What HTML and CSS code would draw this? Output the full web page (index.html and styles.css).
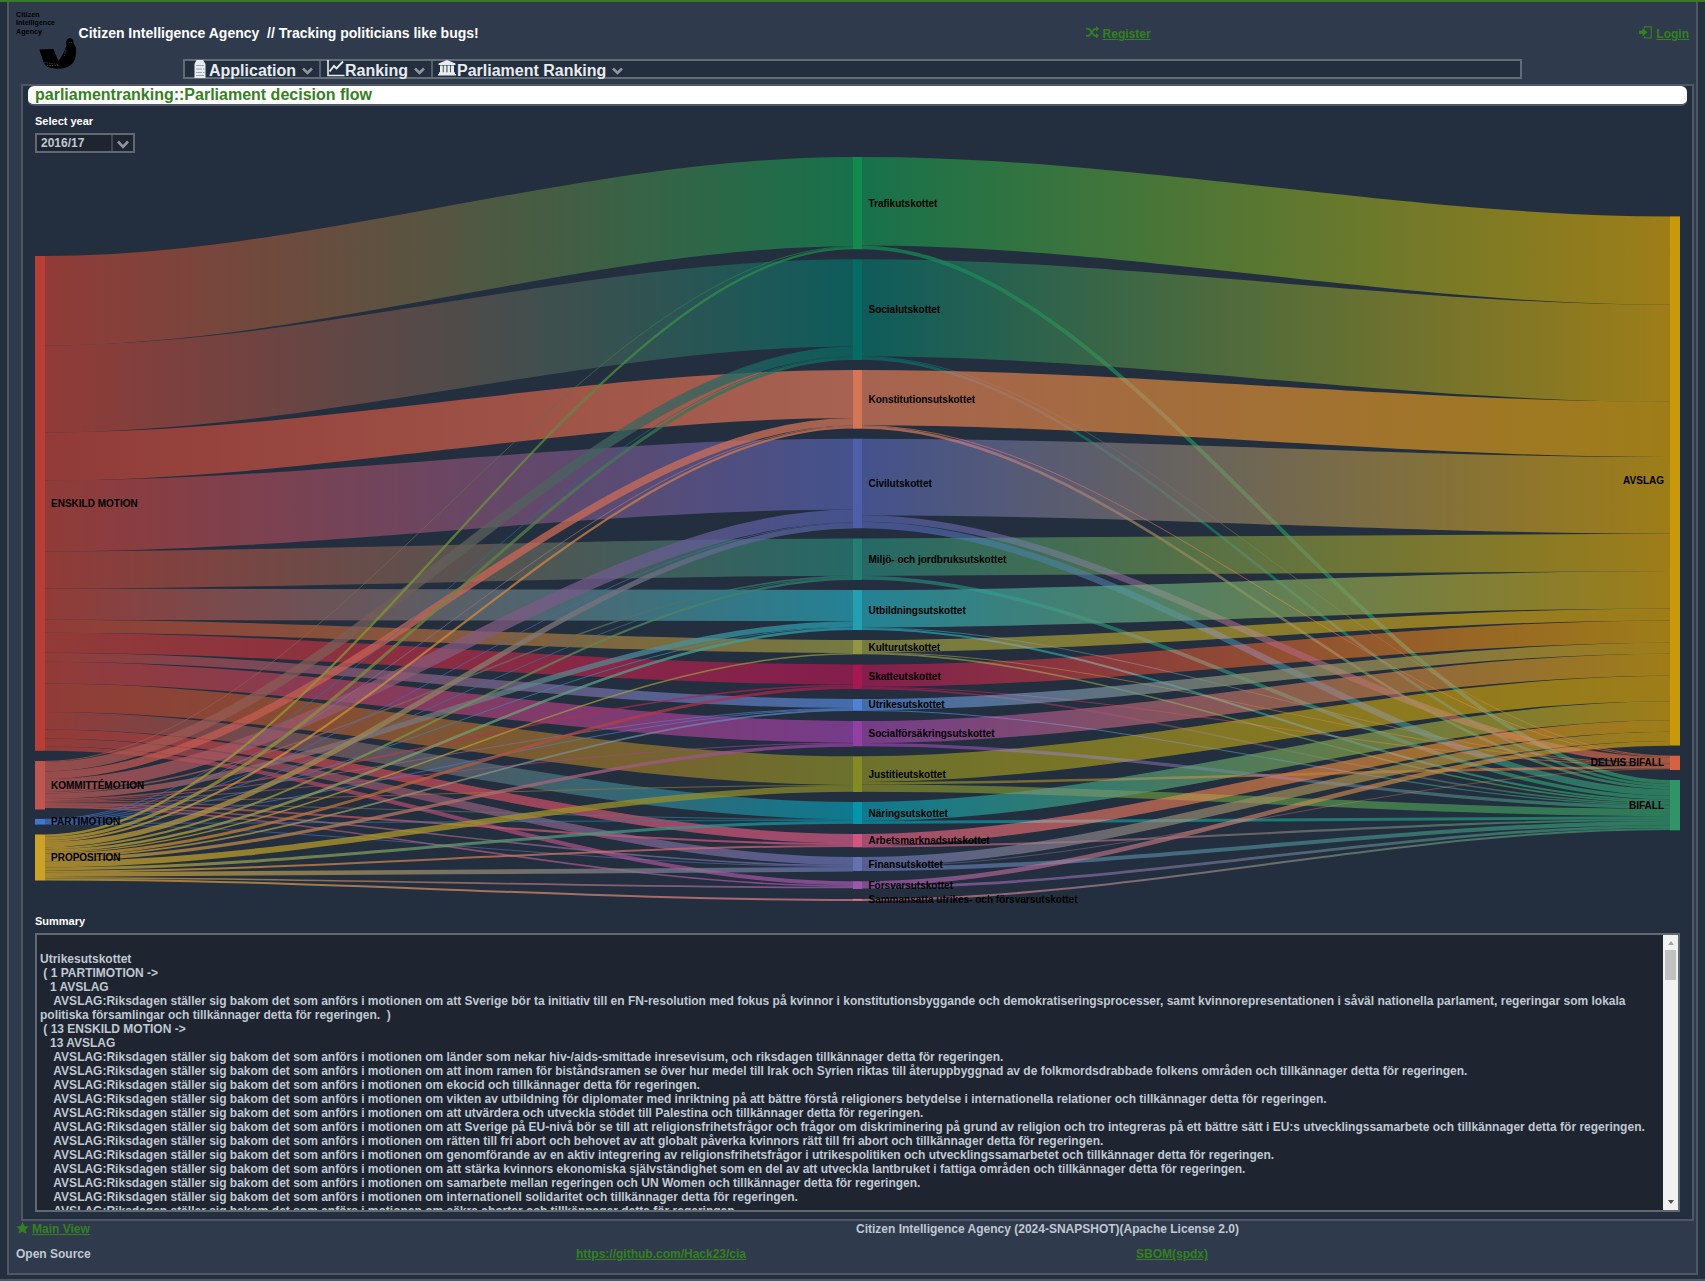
FILE: index.html
```html
<!DOCTYPE html>
<html lang="en">
<head>
<meta charset="utf-8">
<title>Citizen Intelligence Agency</title>
<link rel="stylesheet" href="styles.css">
</head>
<body>
<div class="frame">
  <header class="header">
    <svg class="logo" width="62" height="62" viewBox="0 0 62 62" aria-hidden="true">
      <g class="logo-text"><text x="0" y="7" textLength="23.500">Citizen</text><text x="0" y="15.3" textLength="39">Intelligence</text><text x="0" y="23.6" textLength="26">Agency</text></g>
      <path d="M23.300 39.500 L37.500 39 L42.500 51 Q47 45 49.500 38.500 L50.500 35.500 Q49 29.500 53.500 28 Q58 28.500 57.500 33 L60 38 Q60.500 48 57 53 Q51 59.500 41 58.500 Q30 59 27.500 52 Z" fill="#000"/>
      <path d="M52.500 33 q2 -1.500 4 0 M28 52.500 l14 2 M31 55.500 h12 M50 40 l-2 7" stroke="#58616c" stroke-width=".6" stroke-dasharray="1.500 1" fill="none"/>
    </svg>
    <div class="top-row">
      <div class="site-title">Citizen Intelligence Agency&nbsp; // Tracking politicians like bugs!</div>
      <div class="action"><svg width="13" height="13" viewBox="0 0 13 13"><path d="M0 2.800 H2.500 C5 2.800 6.500 9.800 9.500 9.800 H11 M0 9.800 H2.500 C5 9.800 6.500 2.800 9.500 2.800 H11" fill="none" stroke="currentColor" stroke-width="1.800"/><path d="M10 0 L13 2.800 L10 5.600Z M10 7 L13 9.800 L10 12.600Z" fill="currentColor"/></svg><a href="#">Register</a></div>
      <div class="action"><svg width="13" height="13" viewBox="0 0 13 13"><path d="M0 4.400 H3.500 V1.900 L8.500 6.200 L3.500 10.500 V8 H0Z" fill="currentColor"/><path d="M5.500 2.500 V.8 H12.200 V11.800 H5.500 V10.200" fill="none" stroke="currentColor" stroke-width="1.200"/></svg><a href="#">Login</a></div>
    </div>
    <nav class="menu">
      <div class="item first"><svg class="ic" width="12" height="18" viewBox="0 0 12 18"><path d="M2.500 0 H9 L11.500 4 V18 H.5 V4Z" fill="#e8ebf0"/><path d="M2 5.500H10M2 9H8M2 12.500H8M9 9h1.500M9 12.500h1.500M2 15.500h8" stroke="#8b929e" stroke-width=".8"/></svg><span class="m1">Application</span><svg class="chev" width="11" height="8" viewBox="0 0 11 8"><path d="M1 1.500 L5.500 6 L10 1.500"/></svg></div>
      <div class="item second"><svg class="ic" width="18" height="17" viewBox="0 0 18 17"><path d="M1 0 V15.500 H17.500" fill="none" stroke="#e8ebf0" stroke-width="1.600"/><path d="M2.500 11.500 L7 6 L9.500 8.500 L16 1.500" fill="none" stroke="#e8ebf0" stroke-width="1.900"/></svg><span>Ranking</span><svg class="chev" width="11" height="8" viewBox="0 0 11 8"><path d="M1 1.500 L5.500 6 L10 1.500"/></svg></div>
      <div class="item third"><svg class="ic" width="18" height="16" viewBox="0 0 18 16"><path d="M9 0 L17.500 3.500 V5 H.5 V3.500Z M2 5.500 H4.800 V12.500 H2Z M5.600 5.500 H8.500 V12.500 H5.600Z M9.400 5.500 H12.200 V12.500 H9.400Z M13 5.500 H16 V12.500 H13Z M1 12.300 H17 V14 H18 V15.500 H0 V14 H1Z" fill="#e8ebf0"/></svg><span>Parliament Ranking</span><svg class="chev" width="11" height="8" viewBox="0 0 11 8"><path d="M1 1.500 L5.500 6 L10 1.500"/></svg></div>
    </nav>
  </header>

  <main class="main">
    <h1 class="page-title">parliamentranking::Parliament decision flow</h1>
    <section class="content">
      <div class="caption">Select year</div>
      <div class="combo"><span>2016/17</span><i><svg class="chev" width="12" height="9" viewBox="0 0 12 9"><path d="M1 1.500 L6 6.800 L11 1.500"/></svg></i></div>
      <svg id="flow" class="flow" width="1645" height="761" viewBox="0 0 1645 761"></svg>
      <div class="caption">Summary</div>
      <div class="summary">
        <div class="summary-text">
Utrikesutskottet
 ( 1 PARTIMOTION -&gt;
   1 AVSLAG
    AVSLAG:Riksdagen ställer sig bakom det som anförs i motionen om att Sverige bör ta initiativ till en FN-resolution med fokus på kvinnor i konstitutionsbyggande och demokratiseringsprocesser, samt kvinnorepresentationen i såväl nationella parlament, regeringar som lokala politiska församlingar och tillkännager detta för regeringen.  )
 ( 13 ENSKILD MOTION -&gt;
   13 AVSLAG
    AVSLAG:Riksdagen ställer sig bakom det som anförs i motionen om länder som nekar hiv-/aids-smittade inresevisum, och riksdagen tillkännager detta för regeringen.
    AVSLAG:Riksdagen ställer sig bakom det som anförs i motionen om att inom ramen för biståndsramen se över hur medel till Irak och Syrien riktas till återuppbyggnad av de folkmordsdrabbade folkens områden och tillkännager detta för regeringen.
    AVSLAG:Riksdagen ställer sig bakom det som anförs i motionen om ekocid och tillkännager detta för regeringen.
    AVSLAG:Riksdagen ställer sig bakom det som anförs i motionen om vikten av utbildning för diplomater med inriktning på att bättre förstå religioners betydelse i internationella relationer och tillkännager detta för regeringen.
    AVSLAG:Riksdagen ställer sig bakom det som anförs i motionen om att utvärdera och utveckla stödet till Palestina och tillkännager detta för regeringen.
    AVSLAG:Riksdagen ställer sig bakom det som anförs i motionen om att Sverige på EU-nivå bör se till att religionsfrihetsfrågor och frågor om diskriminering på grund av religion och tro integreras på ett bättre sätt i EU:s utvecklingssamarbete och tillkännager detta för regeringen.
    AVSLAG:Riksdagen ställer sig bakom det som anförs i motionen om rätten till fri abort och behovet av att globalt påverka kvinnors rätt till fri abort och tillkännager detta för regeringen.
    AVSLAG:Riksdagen ställer sig bakom det som anförs i motionen om genomförande av en aktiv integrering av religionsfrihetsfrågor i utrikespolitiken och utvecklingssamarbetet och tillkännager detta för regeringen.
    AVSLAG:Riksdagen ställer sig bakom det som anförs i motionen om att stärka kvinnors ekonomiska självständighet som en del av att utveckla lantbruket i fattiga områden och tillkännager detta för regeringen.
    AVSLAG:Riksdagen ställer sig bakom det som anförs i motionen om samarbete mellan regeringen och UN Women och tillkännager detta för regeringen.
    AVSLAG:Riksdagen ställer sig bakom det som anförs i motionen om internationell solidaritet och tillkännager detta för regeringen.
    AVSLAG:Riksdagen ställer sig bakom det som anförs i motionen om säkra aborter och tillkännager detta för regeringen.</div>
        <div class="scroll"><b class="up"></b><b class="thumb"></b><b class="down"></b></div>
      </div>
    </section>
  </main>

  <footer class="footer">
    <div class="main-view"><svg width="13" height="12" viewBox="0 0 13 12"><path d="M6.500 0 L8.400 4 L12.800 4.500 L9.500 7.400 L10.400 11.800 L6.500 9.600 L2.600 11.800 L3.500 7.400 L.2 4.500 L4.600 4Z" fill="currentColor"/></svg><a href="#">Main View</a></div>
    <div class="license">Citizen Intelligence Agency (2024-SNAPSHOT)(Apache License 2.0)</div>
    <div class="open">Open Source</div>
    <div class="repo"><a href="#">https://github.com/Hack23/cia</a></div>
    <div class="sbom"><a href="#">SBOM(spdx)</a></div>
  </footer>
</div>
<script src="flow.js"></script>
</body>
</html>
```
FILE: styles.css
```css
* { box-sizing: border-box; }
body {
  margin: 0;
  height: 1281px;
  overflow: hidden;
  background: #232f3e;
  border-top: 2px solid #397a26;
  border-bottom: 2px solid #4f5765;
  font: bold 12px/14px "Liberation Sans", Arial, sans-serif;
  color: #c0c8d2;
}
a { color: #35801f; text-decoration: underline; }
.frame {
  margin: 0 7px;
  height: 1273px;
  background: #2f3b4c;
  border: solid #4f5765;
  border-width: 0 2px 2px;
}
.header {
  display: grid;
  grid-template-columns: 62.600px 1fr;
  grid-template-rows: 57px 20px;
  height: 82px;
  padding: 0 7px;
}
.logo { grid-row: 1 / 3; margin-top: 8px; }
.logo-text { font: bold 7px "Liberation Sans", Arial, sans-serif; fill: #000; }
.top-row {
  display: grid;
  grid-template-columns: 1007px 1fr auto;
  align-items: start;
}
.site-title { color: #fff; font-size: 14px; line-height: 16px; padding-top: 23px; }
.action { display: flex; gap: 4px; padding-top: 24px; color: #35801f; }
.action a { padding-top: 1px; }
.menu {
  display: flex;
  margin-left: 104.400px;
  width: 1339px;
  background: #232f3e;
  border: 2px solid #636d76;
  font-size: 16px;
  line-height: 18px;
  color: #e8ebf0;
}
.item { display: flex; height: 16px; border-right: 2px solid #565f6b; }
.item span { margin-top: 1px; }
.ic { flex: none; margin-top: -1px; }
.first { width: 136px; padding-left: 9px; }
.first .ic { margin-right: 3px; }
.second { width: 112px; padding-left: 6px; }
.second .ic { margin-right: 0; }
.third .ic { margin-right: 1px; }
.third { padding-left: 5px; border-right: 0; }
.chev { fill: none; stroke: #8e959e; stroke-width: 2.600; }
.item .chev { margin: 6px 0 0 6px; }
.main {
  display: flex;
  flex-direction: column;
  margin: 0 2px 0 12px;
  height: 1137px;
  background: #232f3e;
  border: 2px solid #4f5765;
}
.page-title {
  margin: 0 5px;
  height: 20px;
  padding-left: 7px;
  background: #fff;
  border-bottom: 2px solid #4f5765;
  border-radius: 6px;
  color: #35801f;
  font-size: 16px;
  line-height: 17px;
}
.content { padding: 8px 12px 0; display: flex; flex-direction: column; }
.caption { color: #fff; font-size: 11px; height: 19px; line-height: 15px; }
.combo {
  display: flex;
  justify-content: space-between;
  width: 100px;
  height: 20px;
  background: #1e2531;
  border: 2px solid #62686f;
  line-height: 16px;
}
.combo span { padding-left: 4px; }
.combo i { width: 22px; border-left: 2px solid #3f4652; padding: 5px 0 0 4px; display: flex; }
.flow { display: block; }
.flow text { font: bold 10px "Liberation Sans", Arial, sans-serif; fill: #000; }
.bands { isolation: isolate; }
.bands path { fill: none; stroke-opacity: .74; }
.bands .result { mix-blend-mode: lighten; }
.summary {
  display: flex;
  height: 279px;
  background: #1e2531;
  border: 2px solid #62686f;
}
.summary-text { flex: 1; overflow: hidden; padding: 3px 3px 0; white-space: pre-wrap; }
.scroll { width: 15px; background: #f1f1f1; display: flex; flex-direction: column; align-items: center; }
.scroll b { display: block; }
.up { margin: 6px 0 5px; border: solid transparent; border-width: 0 3px 4px; border-bottom-color: #a3a3a3; }
.thumb { width: 11px; height: 30px; background: #c1c1c1; }
.down { margin: auto 0 6px; border: solid transparent; border-width: 4px 3px 0; border-top-color: #505050; }
.footer {
  display: grid;
  grid-template-columns: 560px 280px 280px 1fr;
  grid-template-rows: 25px 25px;
  padding: 1px 7px 0;
}
.main-view { grid-column: 1 / 3; display: flex; gap: 3px; color: #35801f; }
.license { grid-column: 3 / 5; }
.sbom { grid-column: 4; }
```
FILE: flow.js
```js
// Node columns: [label, colour, y, height]
const left = [
  ["ENSKILD MOTION", "#b83f36", 103, 494.8], ["KOMMITTÉMOTION", "#bf5550", 608, 48.5],
  ["PARTIMOTION", "#4075d0", 665.9, 5.7], ["PROPOSITION", "#cda229", 681.5, 46]
];
const mid = [
  ["Trafikutskottet", "#13884f", 4, 92.3], ["Socialutskottet", "#076b65", 106.3, 100.7],
  ["Konstitutionsutskottet", "#d57558", 217, 58.7], ["Civilutskottet", "#4f5ea8", 285.7, 89.6],
  ["Miljö- och jordbruksutskottet", "#267d74", 385.5, 41.5], ["Utbildningsutskottet", "#249fb2", 437, 40],
  ["Kulturutskottet", "#929543", 487, 14.3], ["Skatteutskottet", "#a51852", 511.5, 24.5],
  ["Utrikesutskottet", "#4f82d3", 546, 11.8], ["Socialförsäkringsutskottet", "#9340a5", 568, 25.3],
  ["Justitieutskottet", "#858927", 603.3, 35.7], ["Näringsutskottet", "#0793aa", 649, 22],
  ["Arbetsmarknadsutskottet", "#cf5781", 681, 13.3], ["Finansutskottet", "#6571b0", 704, 14],
  ["Försvarsutskottet", "#9e56ae", 728.2, 7.8], ["Sammansatta utrikes- och försvarsutskottet", "#dd7394", 745.9, 2]
];
const right = [
  ["AVSLAG", "#c9990b", 63.4, 529.1], ["DELVIS BIFALL", "#d56341", 602.7, 14.3], ["BIFALL", "#2f9468", 627, 50.3]
];
// Band thickness per committee, one row per source / result
const inflow = [
  [89.3, 87.2, 48, 70.9, 37.2, 31.2, 13, 20, 9, 21.7, 28.6, 17.3, 9.1, 8, 4.2, 0],
  [.7, 9.7, 7.6, 13, 1.4, 5.5, 0, 1.4, .7, .7, .7, .7, 1.9, 1.4, 1.4, 0],
  [0, .7, .7, .7, .7, .7, 0, 0, .7, 0, 0, .7, 0, .6, 0, 0],
  [2.3, 3.1, 2.2, 5.2, 2.2, 2.6, 1.3, 3, 1.5, 3.3, 6.2, 3, 2, 4.6, 1.4, 2]
];
const outflow = [
  [88.4, 97, 55.3, 76.5, 37.5, 37.3, 12, 22.3, 11, 22, 25.6, 19, 11.4, 9.3, 4.7, 0],
  [0, .8, .7, 6.6, 0, .7, .7, .8, 0, 0, 2.6, 0, 0, .5, 0, 0],
  [3.9, 2.6, 2.7, 6.5, 3.8, 2.1, 1.4, 1.5, 1, 3.3, 7.3, 3, 1.9, 4.2, 2.7, 2]
];
let defs = "", links = "", nodes = "", id = 0;
function band(kind, x0, x1, y0, y1, h, c0, c1) {
  const a = x0 + (x1 - x0) / 3, b = x1 - (x1 - x0) / 3;
  const s = y0 + h / 2, e = y1 + h / 2;
  defs += `<linearGradient id="g${id}" gradientUnits="userSpaceOnUse" x1="${x0}" x2="${x1}" y1="0" y2="0"><stop stop-color="${c0}"/><stop offset="1" stop-color="${c1}"/></linearGradient>`;
  links += `<path class="${kind}" stroke="url(#g${id++})" stroke-width="${h < 2 ? h + .2 : h}" d="M${x0} ${s}C${a} ${s} ${b} ${e} ${x1} ${e}"/>`;
}
const inY = mid.map(n => n[2]), outY = mid.map(n => n[2]);
inflow.forEach((row, s) => {
  let y = left[s][2];
  row.forEach((h, m) => {
    if (!h) return;
    band("source", 10, 818, y, inY[m], h, left[s][1], mid[m][1]);
    y += h; inY[m] += h;
  });
});
const endY = right.map(n => n[2]);
outflow.forEach((row, r) => row.forEach((h, m) => {
  if (!h) return;
  band("result", 827, 1635, outY[m], endY[r], h, mid[m][1], right[r][1]);
  outY[m] += h; endY[r] += h;
}));
function column(list, x, w, tx, anchor) {
  list.forEach(([t, c, y, h]) => {
    nodes += `<rect x="${x}" y="${y}" width="${w}" height="${h}" fill="${c}"/><text x="${tx}" y="${Math.round(y + h / 2 + 3.52)}" text-anchor="${anchor}">${t}</text>`;
  });
}
column(left, 0, 10, 16, "start");
column(mid, 818, 9, 833.5, "start");
column(right, 1635, 10, 1629, "end");
document.getElementById("flow").innerHTML = `<defs>${defs}</defs><g class="bands">${links}</g>${nodes}`;
```
